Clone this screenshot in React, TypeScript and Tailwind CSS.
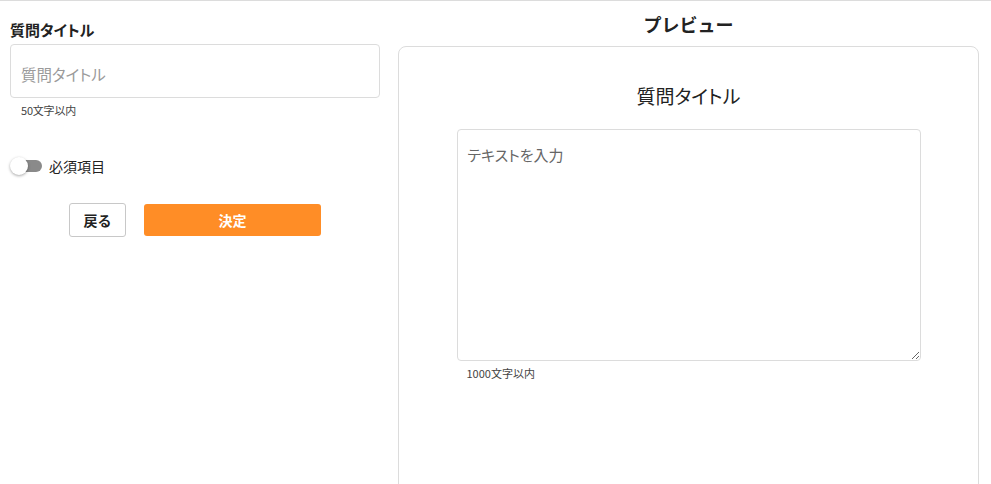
export default function App() {
  return (
    <div className="w-[991px] h-[484px] overflow-hidden bg-white border-t border-[#dcdcdc] flex font-['Noto_Sans_CJK_JP',sans-serif] text-[#222]">
      {/* Form column */}
      <div className="w-[370px] ml-[10px] pt-[17px] shrink-0">
        <div className="text-[15px] font-bold leading-[24px] [font-feature-settings:'palt']">質問タイトル</div>
        <input
          className="mt-[2px] w-full h-[54px] box-border border border-[#dcdcdc] rounded-[4px] px-[10px] pt-[6px] text-[15.5px] [font-feature-settings:'palt'] placeholder:text-[#9a9a9a] outline-none"
          placeholder="質問タイトル"
        />
        <div className="mt-[4px] ml-[11px] text-[11px] leading-[16px] text-[#444] tracking-[-0.2px]">50文字以内</div>

        <div className="mt-[36px] flex items-center h-[24px]">
          <div className="relative w-[32px] h-[24px] flex items-center">
            <div className="ml-[2px] w-[30px] h-[12px] rounded-full bg-[#8a8a8a]" />
            <div className="absolute left-0 top-[3px] w-[18px] h-[18px] rounded-full bg-white shadow-[0_1px_3px_rgba(0,0,0,0.35)]" />
          </div>
          <span className="ml-[7px] text-[14px] leading-[24px]">必須項目</span>
        </div>

        <div className="mt-[25px] flex justify-center items-center gap-[18px]">
          <button className="w-[57px] h-[34px] border border-[#c8c8c8] rounded-[3px] bg-white text-[14px] font-bold text-[#222]">
            戻る
          </button>
          <button className="w-[177px] h-[32px] rounded-[3px] bg-[#ff8d26] text-[14px] font-bold text-white">
            決定
          </button>
        </div>
      </div>

      {/* Preview column */}
      <div className="ml-[18px] w-[581px] shrink-0 pt-[10px]">
        <div className="text-center text-[18px] font-bold leading-[26px]">プレビュー</div>
        <div className="mt-[9px] h-[470px] border border-[#dcdcdc] rounded-[8px] flex flex-col items-center pt-[35px]">
          <div className="text-[19px] leading-[28px] [font-feature-settings:'palt']">質問タイトル</div>
          <div className="mt-[19px] w-[464px]">
            <textarea
              className="block w-full h-[232px] box-border border border-[#dcdcdc] rounded-[4px] px-[10px] pt-[14px] text-[15px] leading-[22px] [font-feature-settings:'palt'] placeholder:text-[#666] outline-none"
              placeholder="テキストを入力"
            />
            <div className="mt-[4px] ml-[10px] text-[11px] leading-[16px] text-[#444]">1000文字以内</div>
          </div>
        </div>
      </div>
    </div>
  )
}
